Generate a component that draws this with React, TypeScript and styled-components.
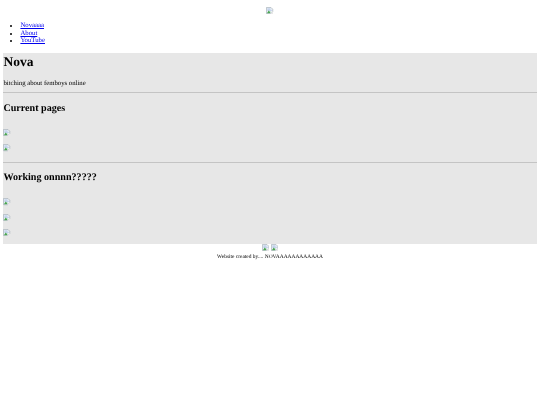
import React from "react";
import styled, { createGlobalStyle } from "styled-components";

const Global = createGlobalStyle`
  html, body { margin: 0; padding: 0; background: #fff; }
  body {
    font-family: "Liberation Serif", "Times New Roman", serif;
    font-size: 6.75px;
    line-height: 7.6px;
    color: #000;
    text-rendering: geometricPrecision;
  }
`;

const Page = styled.div`
  padding: 7px 3.4px 0;
  filter: blur(0.2px);
`;

const TopLogo = styled.div`
  display: flex;
  justify-content: center;
  height: 7px;
`;

const NavList = styled.ul`
  margin: 8px 0 8.6px;
  padding: 0 0 0 17px;
  list-style: disc;
`;

const NavItem = styled.li`
  height: 7.6px;
`;

const NavLink = styled.a`
  color: #0000ee;
  text-decoration: underline;
`;

const Panel = styled.main`
  background: #e7e7e7;
  height: 190.4px;
  overflow: hidden;
`;

const Title = styled.h1`
  margin: 0.4px 0 10.2px;
  font-size: 13.5px;
  line-height: 15.6px;
  font-weight: 700;
`;

const Tagline = styled.p`
  margin: 0 0 5.2px;
`;

const Rule = styled.hr`
  margin: 0;
  border: 0;
  height: 1px;
  background: #c4c4c4;
`;

const Heading = styled.h2`
  margin: 9.6px 0 14.8px;
  font-size: 10.1px;
  line-height: 11.4px;
  font-weight: 700;
`;

const Shots = styled.div`
  display: flex;
  flex-direction: column;
  gap: 8px;
  margin-bottom: 10.2px;
`;

const Footer = styled.footer`
  display: flex;
  flex-direction: column;
  align-items: center;
  font-size: 5.45px;
  line-height: 6.4px;
`;

const Badges = styled.div`
  display: flex;
  gap: 1.4px;
  height: 8.6px;
`;

const Credit = styled.div`
  margin-top: 1.4px;
`;

const IconSvg = styled.svg`
  display: block;
  width: 7.2px;
  height: 7.2px;
`;

const BrokenImage = () => (
  <IconSvg viewBox="0 0 16 16">
    <path d="M1 1h10l4 4v5l-4 5H1z" fill="#eef1f5" stroke="#a3adb8" strokeWidth="1.5" />
    <path d="M3 3h7v3h3v3H3z" fill="#c4d3ec" />
    <path d="M2 14l4-6 3 3 2-1-2.500 4z" fill="#4aa552" />
    <path d="M10 15.500l5.500-6.500v6.500z" fill="#e7e7e7" />
  </IconSvg>
);

export default function App() {
  return (
    <>
      <Global />
      <Page>
        <TopLogo>
          <BrokenImage />
        </TopLogo>
        <nav>
          <NavList>
            <NavItem><NavLink href="#">Novaaaa</NavLink></NavItem>
            <NavItem><NavLink href="#">About</NavLink></NavItem>
            <NavItem><NavLink href="#">YouTube</NavLink></NavItem>
          </NavList>
        </nav>
        <Panel>
          <Title>Nova</Title>
          <Tagline>bitching about femboys online</Tagline>
          <Rule />
          <Heading>Current pages</Heading>
          <Shots>
            <BrokenImage />
            <BrokenImage />
          </Shots>
          <Rule />
          <Heading>Working onnnn?????</Heading>
          <Shots>
            <BrokenImage />
            <BrokenImage />
            <BrokenImage />
          </Shots>
        </Panel>
        <Footer>
          <Badges>
            <BrokenImage />
            <BrokenImage />
          </Badges>
          <Credit>Website created by.... NOVAAAAAAAAAAAA</Credit>
        </Footer>
      </Page>
    </>
  );
}
